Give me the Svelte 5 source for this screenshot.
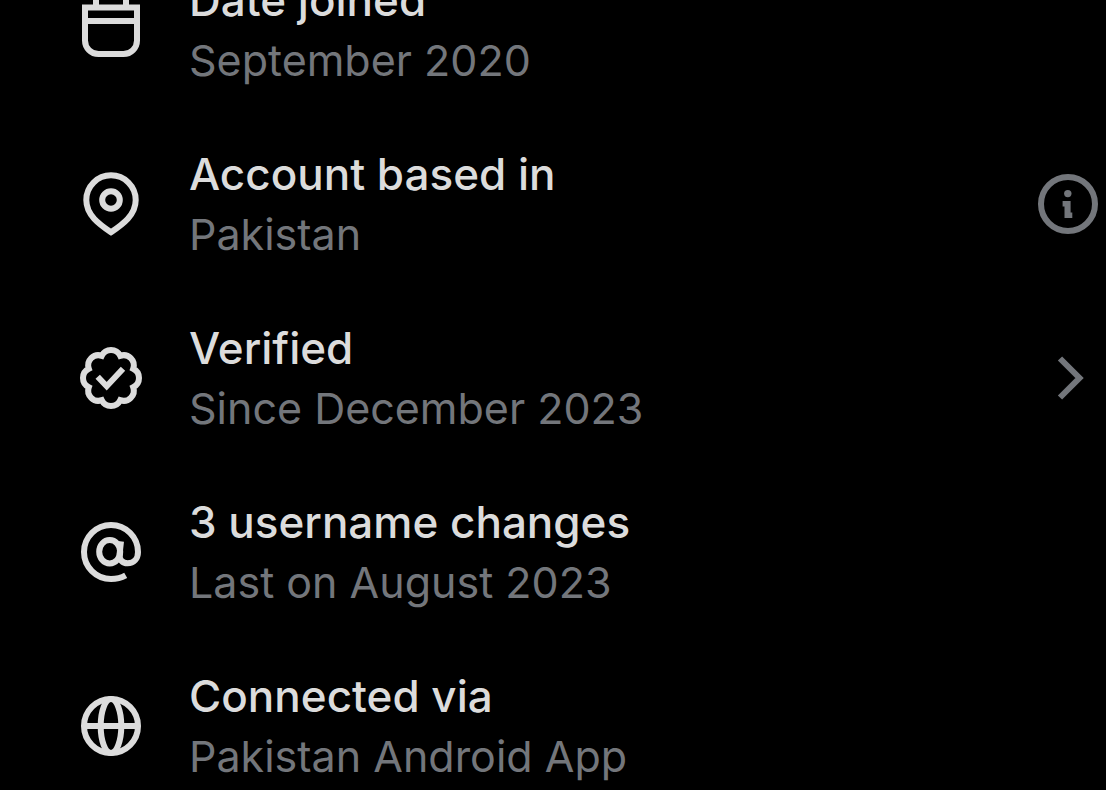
<script>
  const rows = [
    { icon: "calendar", title: "Date joined", detail: "September 2020" },
    {
      icon: "location",
      title: "Account based in",
      detail: "Pakistan",
      action: "info",
      actionLabel: "About account location",
    },
    {
      icon: "verified",
      title: "Verified",
      detail: "Since December 2023",
      action: "chevron",
      actionLabel: "Verification details",
    },
    { icon: "at", title: "3 username changes", detail: "Last on August 2023" },
    { icon: "globe", title: "Connected via", detail: "Pakistan Android App" },
  ];
</script>

<main class="about">
  <ul class="rows">
    {#each rows as row (row.icon)}
      <li class="row">
        <svg class="icon" viewBox="0 0 72 72" aria-hidden="true">
          {#if row.icon === "calendar"}
            <path d="M10 13.5h52v33a13.500 13.500 0 0 1-13.500 13.500h-25a13.500 13.500 0 0 1-13.500-13.500z" />
            <path d="M10 27h52M21 4v9M51 4v9" />
          {:else if row.icon === "location"}
            <path
              d="M36 64.2C24 56 11.3 47 11.3 32a24.7 24.7 0 0 1 49.4 0C60.7 47 48 56 36 64.2z"
            />
            <circle cx="36" cy="32" r="8.8" />
          {:else if row.icon === "verified"}
            <path
              d="M26.8 13.8A10.2 10.2 0 0 1 45.2 13.8A10.2 10.2 0 0 1 58.2 26.8A10.2 10.2 0 0 1 58.2 45.2A10.2 10.2 0 0 1 45.2 58.2A10.2 10.2 0 0 1 26.8 58.2A10.2 10.2 0 0 1 13.8 45.2A10.2 10.2 0 0 1 13.8 26.8A10.2 10.2 0 0 1 26.8 13.8z"
            />
            <path d="M22.7 34.7l9 9.500L48 26.700" />
          {:else if row.icon === "at"}
            <ellipse cx="34.7" cy="35.7" rx="10.5" ry="11.7" />
            <path
              d="M46 25.3L44.6 38c-.6 6 3 9.3 8 9.3 6 0 10.4-4.3 10.4-11.3A27 27 0 1 0 36 63c5.5 0 10.5-1.3 14.7-3.7"
            />
          {:else}
            <circle cx="36" cy="36" r="27" />
            <ellipse cx="36" cy="36" rx="10.3" ry="27" />
            <path d="M9 36h54" />
          {/if}
        </svg>

        <div class="text">
          <div class="title">{row.title}</div>
          <div class="detail">{row.detail}</div>
        </div>

        {#if row.action}
          <button class="action" type="button" aria-label={row.actionLabel}>
            <svg class="icon" viewBox="0 0 72 72" aria-hidden="true">
              {#if row.action === "info"}
                <circle cx="36" cy="36" r="27" />
                <circle class="solid" cx="35.8" cy="25.6" r="3.7" />
                <path
                  class="solid"
                  d="M30.6 33h8v11.500h1.700v5.500h-7.800V38.500h-1.900z"
                />
              {:else}
                <path d="M28 16.5L47.5 36 28 55.5" />
              {/if}
            </svg>
          </button>
        {/if}
      </li>
    {/each}
  </ul>
</main>

<style>
  :global(body) {
    background: #000;
    overflow: hidden;
  }

  .about {
    color: #dcdcdc;
    font-family: Inter, "Liberation Sans", sans-serif;
    font-size: 44px;
    line-height: 60px;
  }

  /* The list is scrolled a little way past its first row */
  .rows {
    display: flex;
    flex-direction: column;
    gap: 54px;
    margin: -30px 0 0;
    padding: 0 2px 0 75px;
    list-style: none;
  }

  .row {
    display: flex;
    align-items: center;
    gap: 42px;
  }

  .icon {
    display: block;
    flex: none;
    width: 72px;
    height: 72px;
    fill: none;
    stroke: currentColor;
    stroke-width: 6;
  }

  .solid {
    fill: currentColor;
    stroke: none;
  }

  .text {
    flex: 1;
    min-width: 0;
  }

  .title {
    font-weight: 500;
  }

  .detail {
    color: #73767b;
    font-size: 43px;
  }

  .action {
    flex: none;
    padding: 0;
    border: 0;
    background: none;
    color: #73767b;
    cursor: pointer;
  }
</style>
